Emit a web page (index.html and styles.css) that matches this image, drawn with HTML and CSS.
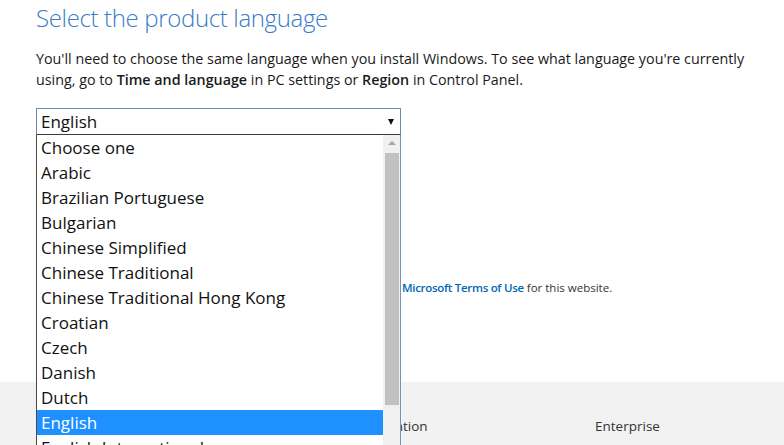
FILE: index.html
```html
<!DOCTYPE html>
<html lang="en">
<head>
<meta charset="utf-8">
<title>Select the product language</title>
<link rel="stylesheet" href="styles.css">
</head>
<body>
<main class="content">
  <h1 class="title">Select the product language</h1>
  <p class="intro">You'll need to choose the same language when you install Windows. To see what language you're currently using, go to <b>Time and language</b> in PC settings or <b>Region</b> in Control Panel.</p>
  <div class="picker">
    <div class="select">
      <span class="select-value">English</span>
      <span class="select-arrow"></span>
    </div>
    <div class="list">
      <ul class="options">
        <li>Choose one</li>
        <li>Arabic</li>
        <li>Brazilian Portuguese</li>
        <li>Bulgarian</li>
        <li>Chinese Simplified</li>
        <li>Chinese Traditional</li>
        <li>Chinese Traditional Hong Kong</li>
        <li>Croatian</li>
        <li>Czech</li>
        <li>Danish</li>
        <li>Dutch</li>
        <li class="selected">English</li>
        <li>English International</li>
      </ul>
      <div class="scrollbar">
        <span class="scroll-up"></span>
        <span class="thumb"></span>
      </div>
    </div>
  </div>
  <p class="terms"><a href="#" class="link">Microsoft Terms of Use</a> for this website.</p>
</main>
<footer class="footer">
  <div class="footer-col">Microsoft Store</div>
  <div class="footer-col">Education</div>
  <div class="footer-col">Enterprise</div>
</footer>
</body>
</html>
```

FILE: styles.css
```css
html, body {
  margin: 0;
  padding: 0;
}
body {
  font-family: "Open Sans", "Noto Sans", sans-serif;
  background: #fff;
  color: #1a1a1a;
  width: 784px;
  height: 445px;
  overflow: hidden;
}
.content {
  padding: 0 0 0 36px;
  height: 382px;
  box-sizing: border-box;
}
.title {
  margin: 0;
  padding-top: 1px;
  font-weight: 300;
  font-size: 24px;
  line-height: 34px;
  color: #3a7bc8;
  letter-spacing: -0.35px;
}
.intro {
  margin: 13px 0 0 0;
  width: 722px;
  font-size: 14.3px;
  line-height: 21px;
  color: #1a1a1a;
}
.intro b {
  font-weight: 600;
}
.picker {
  position: relative;
  margin-top: 18px;
  width: 365px;
  z-index: 2;
}
.select {
  height: 27px;
  border: 1px solid #7289ad;
  box-sizing: border-box;
  border-bottom-color: #3c3c3c;
  display: flex;
  align-items: center;
  justify-content: space-between;
  padding: 0 6px 0 4px;
  background: #fff;
}
.select-value {
  font-size: 17px;
  line-height: 25px;
  color: #111;
}
.select-arrow {
  width: 0;
  height: 0;
  border-left: 3.5px solid transparent;
  border-right: 3.5px solid transparent;
  border-top: 6px solid #111;
}
.list {
  position: absolute;
  top: 27px;
  left: 0;
  width: 365px;
  height: 330px;
  box-sizing: border-box;
  border-left: 1px solid #4a4a4a;
  border-right: 1px solid #7892bd;
  background: #fff;
  display: flex;
}
.options {
  list-style: none;
  margin: 0;
  padding: 0;
  flex: 1;
}
.options li {
  height: 25px;
  line-height: 25px;
  padding-left: 4px;
  font-size: 17px;
  color: #111;
  white-space: nowrap;
}
.options li.selected {
  background: #1e90ff;
  color: #fff;
}
.scrollbar {
  width: 17px;
  background: #f0f0f0;
  display: flex;
  flex-direction: column;
  align-items: center;
}
.scroll-up {
  margin-top: 6px;
  width: 0;
  height: 0;
  border-left: 4px solid transparent;
  border-right: 4px solid transparent;
  border-bottom: 4px solid #a3a3a3;
}
.thumb {
  margin-top: 8px;
  width: 14px;
  height: 252px;
  background: #c1c1c1;
}
.terms {
  margin: 145px 0 0 366px;
  font-size: 11.5px;
  color: #333;
}
.link {
  color: #0067b8;
  font-weight: 600;
  text-decoration: none;
  letter-spacing: -0.3px;
}
.footer {
  background: #f2f2f2;
  height: 63px;
  box-sizing: border-box;
  padding: 35px 0 0 135px;
  display: grid;
  grid-template-columns: 230px 230px auto;
  font-size: 13.5px;
  color: #333;
}
.footer-col {
  white-space: nowrap;
}
```
